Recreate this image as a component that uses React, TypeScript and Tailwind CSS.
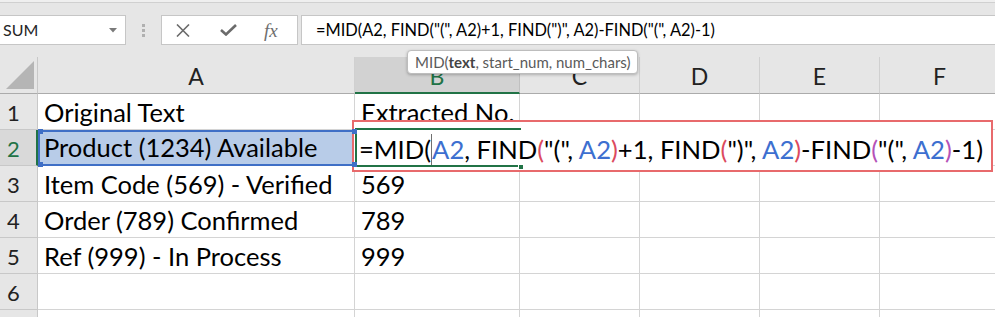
import React from "react";

const CELL_FONT = { fontFamily: "Lato, 'Open Sans', sans-serif" };

type Seg = { t: string; c?: string };
const BLUE = "text-[#3d6fd0]";
const RED = "text-[#dc4a5e]";
const PURPLE = "text-[#b452b8]";

const formulaSegs: Seg[] = [
  { t: ", FIND" },
  { t: "(", c: RED },
  { t: '"("' },
  { t: ", " },
  { t: "A2", c: BLUE },
  { t: ")", c: RED },
  { t: "+1, FIND" },
  { t: "(", c: RED },
  { t: '")"' },
  { t: ", " },
  { t: "A2", c: BLUE },
  { t: ")", c: RED },
  { t: "-FIND" },
  { t: "(", c: PURPLE },
  { t: '"("' },
  { t: ", " },
  { t: "A2", c: BLUE },
  { t: ")", c: PURPLE },
  { t: "-1)" },
];

const rows: { n: string; a: string; b: string }[] = [
  { n: "1", a: "Original Text", b: "Extracted No." },
  { n: "2", a: "Product (1234) Available", b: "" },
  { n: "3", a: "Item Code (569) - Verified", b: "569" },
  { n: "4", a: "Order (789) Confirmed", b: "789" },
  { n: "5", a: "Ref (999) - In Process", b: "999" },
  { n: "6", a: "", b: "" },
  { n: "", a: "", b: "" },
];

function RowHeader({ n, selected }: { n: string; selected?: boolean }) {
  return (
    <div
      className={
        selected
          ? "w-[38px] shrink-0 h-full flex items-end pl-[7px] pb-[5px] bg-[#d9d9d9] border-r-2 border-r-[#217346] border-b border-b-[#c8c8c8] text-[22px] leading-[22px] text-[#217346]"
          : "w-[38px] shrink-0 h-full flex items-end pl-[7px] pb-[5px] bg-[#e6e6e6] border-r border-r-[#c8c8c8] border-b border-b-[#c8c8c8] text-[22px] leading-[22px] text-[#222]"
      }
    >
      {n}
    </div>
  );
}

function Cell({ w, text, pl }: { w: string; text?: string; pl?: string }) {
  return (
    <div
      className={
        w +
        " shrink-0 h-full flex items-end pb-[4px] border-r border-b border-[#d4d4d4] text-[25.5px] leading-[25px] text-black whitespace-nowrap overflow-visible " +
        (pl ?? "pl-[6px]")
      }
    >
      {text}
    </div>
  );
}

export default function App() {
  return (
    <div
      className="relative w-[995px] h-[317px] overflow-hidden bg-white"
      style={CELL_FONT}
    >
      {/* Formula bar area */}
      <div className="h-[57px] bg-[#e6e6e6] flex flex-col">
        <div className="h-[2px] bg-[#efefef]" />
        <div className="h-px bg-[#d0d0d0]" />
        <div className="flex items-center mt-[12px] h-[30px]">
          {/* Name box */}
          <div className="ml-[-1px] w-[127px] h-[30px] bg-white border border-[#c6c6c6] flex items-center justify-between pl-[3px] pr-[8px]">
            <span className="text-[16px] leading-none text-[#262626]">SUM</span>
            <svg width="8" height="5" viewBox="0 0 8 5">
              <path d="M0 0 L8 0 L4 4.5 Z" fill="#7a7a7a" />
            </svg>
          </div>
          {/* dots */}
          <div className="ml-[16px] flex flex-col gap-[2px]">
            <div className="w-[3px] h-[3px] bg-[#b0b0b0]" />
            <div className="w-[3px] h-[3px] bg-[#b0b0b0]" />
            <div className="w-[3px] h-[3px] bg-[#b0b0b0]" />
          </div>
          {/* cancel / enter / fx */}
          <div className="ml-[16px] w-[137px] h-[30px] bg-white border border-[#c6c6c6] flex items-center">
            <svg className="ml-[14px]" width="14" height="13" viewBox="0 0 14 13">
              <path d="M1 0.5 L13 12.5 M13 0.5 L1 12.5" stroke="#6b6b6b" strokeWidth="1.6" />
            </svg>
            <svg className="ml-[30px]" width="17" height="12" viewBox="0 0 17 12">
              <path d="M1 6 L6 10.5 L16 1" stroke="#6b6b6b" strokeWidth="2.6" fill="none" />
            </svg>
            <span
              className="ml-[27px] text-[19px] italic leading-none text-[#6e6e6e]"
              style={{ fontFamily: "'Liberation Serif', 'DejaVu Serif', serif" }}
            >
              fx
            </span>
          </div>
          {/* formula input */}
          <div className="ml-[3px] flex-1 mr-[-2px] h-[30px] bg-white border border-[#c6c6c6] flex items-center pl-[14px]">
            <span className="text-[16.4px] leading-none text-black whitespace-nowrap">
              =MID(A2, FIND("(", A2)+1, FIND(")", A2)-FIND("(", A2)-1)
            </span>
          </div>
        </div>
      </div>

      {/* Column headers */}
      <div className="flex h-[37px] bg-[#e6e6e6]">
        <div className="w-[38px] shrink-0 h-full flex items-end justify-end pr-[3px] pb-[4px] border-r border-r-[#c8c8c8] border-b border-b-[#ababab]">
          <svg width="28" height="28" viewBox="0 0 28 28">
            <path d="M28 0 L28 28 L0 28 Z" fill="#b5b5b5" />
          </svg>
        </div>
        <div className="w-[317px] shrink-0 h-full flex items-center justify-center pt-[3px] border-r border-r-[#d0d0d0] border-b border-b-[#ababab] text-[23px] text-[#222]">
          A
        </div>
        <div className="w-[165px] shrink-0 h-full flex items-center justify-center pt-[3px] bg-[#d2d2d2] border-r border-r-[#c0c0c0] border-b-2 border-b-[#217346] text-[23px] text-[#217346]">
          B
        </div>
        <div className="w-[120px] shrink-0 h-full flex items-center justify-center pt-[3px] border-r border-r-[#d0d0d0] border-b border-b-[#ababab] text-[23px] text-[#222]">
          C
        </div>
        <div className="w-[120px] shrink-0 h-full flex items-center justify-center pt-[3px] border-r border-r-[#d0d0d0] border-b border-b-[#ababab] text-[23px] text-[#222]">
          D
        </div>
        <div className="w-[120px] shrink-0 h-full flex items-center justify-center pt-[3px] border-r border-r-[#d0d0d0] border-b border-b-[#ababab] text-[23px] text-[#222]">
          E
        </div>
        <div className="w-[120px] shrink-0 h-full flex items-center justify-center pt-[3px] border-r border-r-[#d0d0d0] border-b border-b-[#ababab] text-[23px] text-[#222]">
          F
        </div>
      </div>

      {/* Rows */}
      {rows.map((r, i) => (
        <div key={i} className="flex h-[36px]">
          <RowHeader n={r.n} selected={i === 1} />
          {i === 1 ? (
            <div className="relative w-[317px] shrink-0 h-full flex items-end pl-[4px] pb-[4px] bg-[#b8cce8] border-2 border-[#3f6fc6] text-[25.5px] leading-[25px] text-black whitespace-nowrap">
              {r.a}
              <div className="absolute z-20 left-[-2px] top-[-3px] w-[5px] h-[5px] bg-[#3f6fc6]" />
              <div className="absolute z-20 left-[-2px] bottom-[-3px] w-[5px] h-[5px] bg-[#3f6fc6]" />
              <div className="absolute z-20 right-[-4px] top-[-3px] w-[5px] h-[5px] bg-[#3f6fc6]" />
              <div className="absolute z-20 right-[-4px] bottom-[-3px] w-[5px] h-[5px] bg-[#3f6fc6]" />
            </div>
          ) : (
            <Cell w="w-[317px]" text={r.a} pl="pl-[6px]" />
          )}
          <Cell w="w-[165px]" text={r.b} pl="pl-[6px]" />
          <Cell w="w-[120px]" />
          <Cell w="w-[120px]" />
          <Cell w="w-[120px]" />
          <Cell w="w-[120px]" />
        </div>
      ))}

      {/* In-cell editor (annotated with red box) */}
      <div className="absolute z-10 left-[352px] top-[120px] w-[641px] h-[52px] border-2 border-[#e86a6c] bg-white pl-[5px] pt-[12px]">
        <div className="absolute left-[1px] top-[6px] w-[166px] h-[39px] border-t-2 border-l-2 border-b-2 border-[#217346]" />
        <div className="absolute left-[164px] top-[42px] w-[6px] h-[6px] bg-[#217346] border border-white" />
        <div className="relative text-[25.6px] leading-[25px] text-black whitespace-nowrap">
          =MID(
          <span className="inline-block w-0 h-[31px] border-l border-[#707070] align-[-6px]" />
          <span className={BLUE}>A2</span>
          {formulaSegs.map((s, k) => (
            <span key={k} className={s.c}>
              {s.t}
            </span>
          ))}
        </div>
      </div>

      {/* Function tooltip */}
      <div className="absolute z-30 left-[407px] top-[50px] w-[231px] h-[24px] rounded-[4px] border border-[#bdbdbd] bg-white shadow-[0_1px_3px_rgba(0,0,0,0.25)] flex items-center pl-[7px]">
        <span className="text-[15px] leading-none text-[#5a5a5a] whitespace-nowrap">
          MID(<b className="font-bold text-[#444]">text</b>, start_num, num_chars)
        </span>
      </div>
    </div>
  );
}
